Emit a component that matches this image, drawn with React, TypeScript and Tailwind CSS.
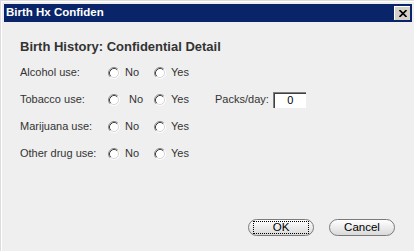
import React from "react";

function Radio() {
  return (
    <svg width="12" height="12" viewBox="0 0 12 12" className="shrink-0">
      <circle cx="6" cy="6" r="4.5" fill="#ffffff" />
      <path d="M2.11 9.89 A5.5 5.5 0 0 1 9.89 2.11" fill="none" stroke="#8a8a8a" strokeWidth="1" />
      <path d="M9.89 2.11 A5.5 5.5 0 0 1 2.11 9.89" fill="none" stroke="#ffffff" strokeWidth="1" />
      <path d="M2.82 9.18 A4.5 4.5 0 0 1 9.18 2.82" fill="none" stroke="#404040" strokeWidth="1" />
      <path d="M9.18 2.82 A4.5 4.5 0 0 1 2.82 9.18" fill="none" stroke="#d8d8d8" strokeWidth="1" />
    </svg>
  );
}

function Row({
  label,
  noShift,
  extra,
}: {
  label: string;
  noShift?: boolean;
  extra?: React.ReactNode;
}) {
  return (
    <div className="flex h-[27px] items-center">
      <div className="w-[88px]">{label}</div>
      <div className="flex w-[46px] items-center">
        <Radio />
        <span className={noShift ? "ml-[9px]" : "ml-[5px]"}>No</span>
      </div>
      <div className="flex w-[61px] items-center">
        <Radio />
        <span className="ml-[5px]">Yes</span>
      </div>
      {extra}
    </div>
  );
}

export default function App() {
  return (
    <div
      className="h-[251px] w-[414px] border-l border-t border-[#dcdcdc] border-r-[#404040] border-b-[#404040] bg-[#efefef]"
      style={{ fontFamily: '"Liberation Sans", Arial, sans-serif' }}
    >
      <div className="flex h-full flex-col border-l border-t border-white border-r-[#808080] border-b-[#808080] p-[2px]">
        <div className="flex h-[18px] items-center justify-between bg-[#0a246a] pl-[2px] pr-[2px]">
          <span className="text-[11.5px] font-bold leading-none text-white">Birth Hx Confiden</span>
          <div className="flex h-[14px] w-[16px] items-center justify-center border-l border-t border-white border-r-[#404040] border-b-[#404040] bg-[#d4d0c8]">
            <svg width="8" height="7" viewBox="0 0 8 7">
              <path d="M0.5 0 L7.5 7 M7.5 0 L0.5 7" stroke="#000" strokeWidth="1.6" />
            </svg>
          </div>
        </div>
        <div className="flex flex-1 flex-col px-[16px] pt-[17px] text-[11px] text-[#333]">
          <div className="text-[13px] font-bold leading-[16px] text-[#333]">
            Birth History: Confidential Detail
          </div>
          <div className="mt-[4px] flex flex-col">
            <Row label="Alcohol use:" />
            <Row
              label="Tobacco use:"
              noShift
              extra={
                <div className="flex items-center">
                  <span>Packs/day:</span>
                  <div className="ml-[4px] border-l border-t border-[#808080] border-r-white border-b-white">
                    <div className="flex h-[15px] w-[32px] items-center justify-center border-l border-t border-[#404040] border-r-[#d4d0c8] border-b-[#d4d0c8] bg-white text-[11px] text-black">
                      0
                    </div>
                  </div>
                </div>
              }
            />
            <Row label="Marijuana use:" />
            <Row label="Other drug use:" />
          </div>
          <div className="flex-1" />
          <div className="mb-[13px] flex justify-end gap-[15px] pr-[1px]">
            <button className="flex h-[17px] w-[66px] rounded-full border border-[#7a7a7a] bg-linear-to-b from-white to-[#d9d9d9] px-[4px] py-[1px] text-[11.5px] text-black">
              <span className="flex flex-1 items-center justify-center border border-dotted border-black leading-none">
                OK
              </span>
            </button>
            <button className="flex h-[17px] w-[66px] items-center justify-center rounded-full border border-[#7a7a7a] bg-linear-to-b from-white to-[#d9d9d9] text-[11.5px] leading-none text-black">
              Cancel
            </button>
          </div>
        </div>
      </div>
    </div>
  );
}
